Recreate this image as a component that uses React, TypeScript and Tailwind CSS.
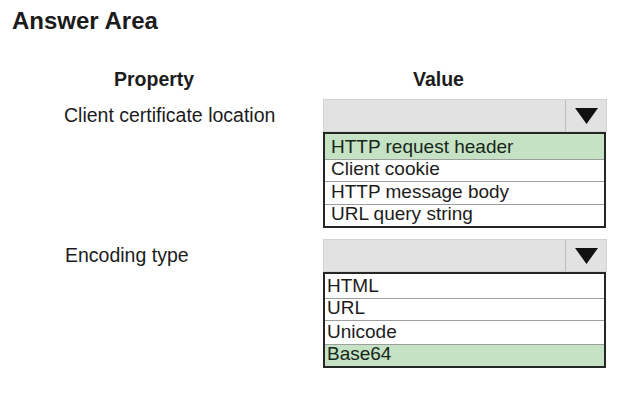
const Arrow = () => (
  <svg width="23" height="16" viewBox="0 0 23 16">
    <polygon points="0,0 23,0 11.5,16" fill="#111" />
  </svg>
);

interface DropdownProps {
  options: string[];
  heights: string[];
  selected: number;
  padLeft: string;
}

const Dropdown = ({ options, heights, selected, padLeft }: DropdownProps) => (
  <div className="w-[284px]">
    <div className="flex h-[33px] bg-[#e2e2e2] border border-[#d3d3d3]">
      <div className="w-[242px] border-r border-[#bdbdbd]" />
      <div className="flex flex-1 items-center justify-center">
        <Arrow />
      </div>
    </div>
    <ul className="border-2 border-[#262626] w-[283px]">
      {options.map((opt, i) => (
        <li
          key={opt}
          className={`flex items-end pb-[1px] ${heights[i]} leading-[22px] text-[19px] ${padLeft} ${
            i > 0 ? 'border-t border-[#9e9e9e]' : ''
          } ${i === selected ? 'bg-[#c6e2c4] text-[#16261a]' : 'bg-white'}`}
        >
          {opt}
        </li>
      ))}
    </ul>
  </div>
);

export default function App() {
  return (
    <div className="w-[630px] h-[393px] bg-white text-[#1c1c1c] font-['Liberation_Sans',Arial,sans-serif]">
      <h1 className="pl-[12px] pt-[7px] text-[24px] leading-[28px] font-bold">Answer Area</h1>

      <div className="flex mt-[32px] h-[24px] text-[19.5px] leading-[24px] font-bold">
        <div className="w-[323px] pl-[114px]">Property</div>
        <div className="pl-[90px]">Value</div>
      </div>

      <div className="flex mt-[8px]">
        <div className="w-[323px] pl-[64px] h-[33px] flex items-center text-[19.5px]">
          Client certificate location
        </div>
        <Dropdown
          options={['HTTP request header', 'Client cookie', 'HTTP message body', 'URL query string']}
          heights={['h-[25px]', 'h-[22px]', 'h-[23px]', 'h-[22px]']}
          selected={0}
          padLeft="pl-[6px]"
        />
      </div>

      <div className="flex mt-[11px]">
        <div className="w-[323px] pl-[65px] h-[33px] flex items-center text-[19.5px]">Encoding type</div>
        <Dropdown
          options={['HTML', 'URL', 'Unicode', 'Base64']}
          heights={['h-[24px]', 'h-[22px]', 'h-[24px]', 'h-[22px]']}
          selected={3}
          padLeft="pl-[2px]"
        />
      </div>
    </div>
  );
}
